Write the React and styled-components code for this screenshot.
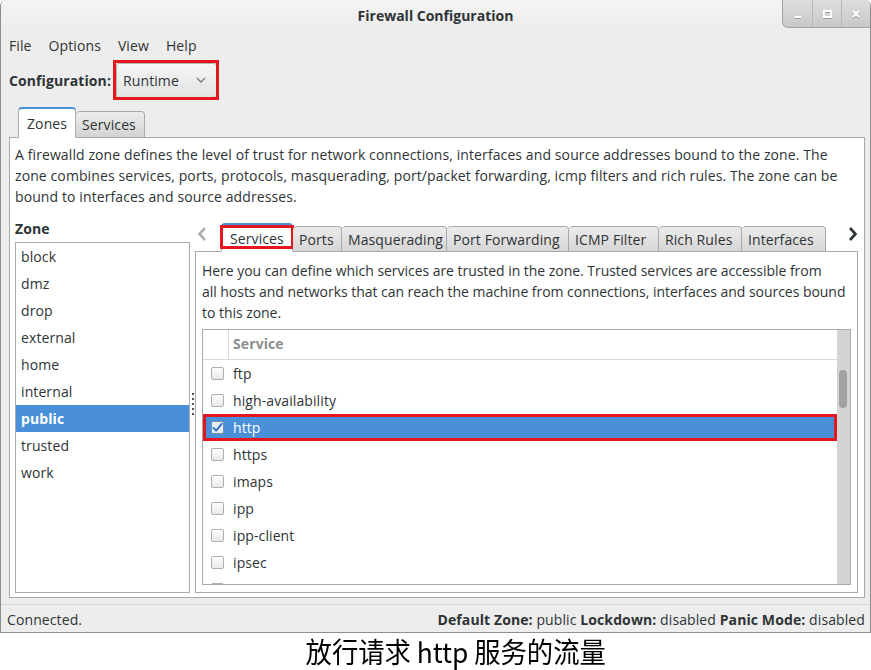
import React from 'react';
import styled, { createGlobalStyle } from 'styled-components';

const GlobalStyle = createGlobalStyle`
  body {
    margin: 0;
    background: #ffffff;
    font-family: "Open Sans", "Noto Sans", sans-serif;
    font-size: 14px;
    letter-spacing: 0.1px;
    color: #2e3436;
  }
  * { box-sizing: border-box; }
`;

const red = '#e5161f';
const blue = '#4a90d9';
const frame = '#a9a9a9';

const zones = ['block', 'dmz', 'drop', 'external', 'home', 'internal', 'public', 'trusted', 'work'];
const services = ['ftp', 'high-availability', 'http', 'https', 'imaps', 'ipp', 'ipp-client', 'ipsec'];
const innerTabs = [
  { label: 'Services', width: 72 },
  { label: 'Ports', width: 49 },
  { label: 'Masquerading', width: 105 },
  { label: 'Port Forwarding', width: 122 },
  { label: 'ICMP Filter', width: 90 },
  { label: 'Rich Rules', width: 83 },
  { label: 'Interfaces', width: 84 },
];

function Checkbox({ checked }) {
  return (
    <Check checked={checked}>
      {checked && (
        <svg width="12" height="11" viewBox="0 0 12 11">
          <path d="M1.5 6 L4.5 9 L10.5 1.5" fill="none" stroke="#2a6bc2" strokeWidth="2" strokeLinecap="round" strokeLinejoin="round" />
        </svg>
      )}
    </Check>
  );
}

function App() {
  return (
    <>
      <GlobalStyle />
      <Window>
        <TitleBar>
          <Title>Firewall Configuration</Title>
          <WindowButtons>
            <WinButton>
              <svg width="10" height="10" viewBox="0 0 10 10"><rect x="2" y="7" width="6" height="2" fill="#fff" /></svg>
            </WinButton>
            <WinButton>
              <svg width="10" height="10" viewBox="0 0 10 10"><rect x="2" y="2" width="7" height="6" fill="none" stroke="#fff" strokeWidth="2" /></svg>
            </WinButton>
            <WinButton>
              <svg width="10" height="10" viewBox="0 0 10 10"><path d="M2 2 L8 8 M8 2 L2 8" stroke="#fff" strokeWidth="2" /></svg>
            </WinButton>
          </WindowButtons>
        </TitleBar>

        <MenuBar>
          <MenuItem>File</MenuItem>
          <MenuItem>Options</MenuItem>
          <MenuItem>View</MenuItem>
          <MenuItem>Help</MenuItem>
        </MenuBar>

        <ConfigRow>
          <Bold>Configuration:</Bold>
          <Combo>
            Runtime
            <svg width="10" height="7" viewBox="0 0 10 7">
              <path d="M1 1 L5 5 L9 1" fill="none" stroke="#7a7a7a" strokeWidth="1.3" />
            </svg>
            <ComboMarker />
          </Combo>
        </ConfigRow>

        <Notebook>
          <TabStrip>
            <Tab active>Zones</Tab>
            <Tab>Services</Tab>
          </TabStrip>
          <Page>
            <Description>
              <Line>A firewalld zone defines the level of trust for network connections, interfaces and source addresses bound to the zone. The</Line>
              <Line>zone combines services, ports, protocols, masquerading, port/packet forwarding, icmp filters and rich rules. The zone can be</Line>
              <Line>bound to interfaces and source addresses.</Line>
            </Description>

            <Lower>
              <ZoneColumn>
                <ZoneLabel>Zone</ZoneLabel>
                <ZoneList>
                  {zones.map(z => (
                    <ZoneItem key={z} selected={z === 'public'}>{z}</ZoneItem>
                  ))}
                </ZoneList>
              </ZoneColumn>

              <Sash>
                {[0, 1, 2, 3, 4].map(i => <Dot key={i} />)}
              </Sash>

              <RightColumn>
                <InnerTabRow>
                  <Arrow>
                    <svg width="10" height="16" viewBox="0 0 10 16">
                      <path d="M8 2 L2.5 8 L8 14" fill="none" stroke="#b0b0b0" strokeWidth="2.6" />
                    </svg>
                  </Arrow>
                  {innerTabs.map((t, i) => (
                    <InnerTab key={t.label} active={i === 0} width={t.width}>
                      {t.label}
                      {i === 0 && <Marker />}
                    </InnerTab>
                  ))}
                  <Spacer />
                  <Arrow right>
                    <svg width="10" height="16" viewBox="0 0 10 16">
                      <path d="M2 2 L7.5 8 L2 14" fill="none" stroke="#2e3436" strokeWidth="2.6" />
                    </svg>
                  </Arrow>
                </InnerTabRow>

                <InnerPage>
                  <InnerDescription>
                    <Line>Here you can define which services are trusted in the zone. Trusted services are accessible from</Line>
                    <Line>all hosts and networks that can reach the machine from connections, interfaces and sources bound</Line>
                    <Line>to this zone.</Line>
                  </InnerDescription>

                  <Tree>
                    <TreeBody>
                      <TreeHeader>
                        <HeaderCheckCell />
                        <HeaderTitle>Service</HeaderTitle>
                      </TreeHeader>
                      {services.map(s => (
                        <ServiceRow key={s} selected={s === 'http'}>
                          <CheckCell><Checkbox checked={s === 'http'} /></CheckCell>
                          <ServiceName>{s}</ServiceName>
                        </ServiceRow>
                      ))}
                      <ServiceRow>
                        <CheckCell><Checkbox /></CheckCell>
                      </ServiceRow>
                    </TreeBody>
                    <Scrollbar>
                      <Thumb />
                    </Scrollbar>
                  </Tree>
                </InnerPage>
              </RightColumn>
            </Lower>
          </Page>
        </Notebook>

        <StatusBar>
          <span>Connected.</span>
          <span>
            <Bold>Default Zone:</Bold> public <Bold>Lockdown:</Bold> disabled <Bold>Panic Mode:</Bold> disabled
          </span>
        </StatusBar>
      </Window>
      <Caption><CaptionText>放行请求 http 服务的流量</CaptionText></Caption>
    </>
  );
}

const Window = styled.div`
  width: 871px;
  height: 633px;
  background: #ededed;
  border: 1px solid #8e8e8e;
  border-top: none;
  border-radius: 6px 6px 0 0;
  display: flex;
  flex-direction: column;
  overflow: hidden;
`;

const TitleBar = styled.div`
  height: 30px;
  flex: none;
  position: relative;
  display: flex;
  align-items: center;
  justify-content: center;
  background: linear-gradient(#f4f4f4, #ececec);
`;

const Title = styled.div`
  font-weight: 700;
  font-size: 14px;
  letter-spacing: 0;
  color: #2e3436;
  margin-top: 1px;
`;

const WindowButtons = styled.div`
  position: absolute;
  top: 0;
  right: -1px;
  height: 28px;
  display: flex;
  border: 1px solid #a4a4a4;
  border-top: none;
  border-radius: 0 0 0 6px;
  overflow: hidden;
  background: linear-gradient(#dedede, #c8c8c8);
`;

const WinButton = styled.div`
  width: 29px;
  display: flex;
  align-items: center;
  justify-content: center;
  border-left: 1px solid #b8b8b8;
  &:first-child { border-left: none; }
  svg { filter: drop-shadow(0 1px 0 #9a9a9a); }
`;

const MenuBar = styled.div`
  height: 30px;
  flex: none;
  display: flex;
  align-items: center;
  padding-left: 8px;
  gap: 17px;
`;

const MenuItem = styled.span``;

const ConfigRow = styled.div`
  height: 40px;
  flex: none;
  display: flex;
  align-items: center;
  padding-left: 8px;
  gap: 5px;
`;

const Bold = styled.b`
  font-weight: 700;
`;

const Combo = styled.div`
  position: relative;
  width: 101px;
  height: 35px;
  border: 1px solid #b6b6b6;
  border-radius: 3px;
  background: linear-gradient(#f6f6f6, #e2e2e2);
  display: flex;
  align-items: center;
  justify-content: space-between;
  padding: 0 10px 0 6px;
`;

const ComboMarker = styled.span`
  position: absolute;
  top: -4px;
  left: -4px;
  right: -3px;
  bottom: -3px;
  border: 3px solid ${red};
`;

const Notebook = styled.div`
  flex: none;
  display: flex;
  flex-direction: column;
  padding: 8px 5px 0 8px;
`;

const TabStrip = styled.div`
  height: 30px;
  display: flex;
  align-items: flex-end;
  padding-left: 9px;
  margin-bottom: -1px;
  position: relative;
  z-index: 1;
`;

const Tab = styled.div`
  height: ${p => (p.active ? '31px' : '27px')};
  padding: 0 8px 0 ${p => (p.active ? '8px' : '6px')};
  display: flex;
  align-items: center;
  border: 1px solid ${frame};
  border-bottom: ${p => (p.active ? '1px solid #fff' : `1px solid ${frame}`)};
  border-top: ${p => (p.active ? `2px solid ${blue}` : `1px solid ${frame}`)};
  border-left: ${p => (p.active ? `1px solid ${frame}` : 'none')};
  border-radius: 4px 4px 0 0;
  background: ${p => (p.active ? '#fff' : 'linear-gradient(#ececec, #d3d3d3)')};
`;

const Page = styled.div`
  height: 461px;
  background: #fff;
  border: 1px solid ${frame};
  display: flex;
  flex-direction: column;
  padding: 0 6px 4px 5px;
`;

const Description = styled.div`
  padding-top: 6px;
  line-height: 21px;
`;

const InnerDescription = styled(Description)`
  padding-top: 8px;
  letter-spacing: -0.04px;
`;

const Line = styled.div`
  white-space: nowrap;
`;

const Lower = styled.div`
  flex: 1;
  display: flex;
  margin-top: 11px;
  min-height: 0;
`;

const ZoneColumn = styled.div`
  width: 175px;
  flex: none;
  display: flex;
  flex-direction: column;
  min-height: 0;
`;

const ZoneLabel = styled.div`
  height: 24px;
  line-height: 21px;
  font-weight: 700;
`;

const ZoneList = styled.div`
  flex: 1;
  border: 1px solid ${frame};
  background: #fff;
  overflow: hidden;
`;

const ZoneItem = styled.div`
  height: 27px;
  line-height: 27px;
  padding-left: 5px;
  background: ${p => (p.selected ? blue : 'transparent')};
  color: ${p => (p.selected ? '#fff' : 'inherit')};
  font-weight: ${p => (p.selected ? 700 : 400)};
`;

const Sash = styled.div`
  width: 5px;
  flex: none;
  display: flex;
  flex-direction: column;
  align-items: center;
  justify-content: center;
  gap: 3px;
  padding-bottom: 4px;
`;

const Dot = styled.span`
  width: 2px;
  height: 2px;
  background: #555;
`;

const RightColumn = styled.div`
  flex: 1;
  min-width: 0;
  display: flex;
  flex-direction: column;
  min-height: 0;
`;

const InnerTabRow = styled.div`
  height: 34px;
  flex: none;
  display: flex;
  align-items: flex-end;
  margin-bottom: -1px;
  position: relative;
  z-index: 1;
`;

const Arrow = styled.div`
  width: ${p => (p.right ? '14px' : '26px')};
  height: 34px;
  display: flex;
  align-items: center;
  justify-content: ${p => (p.right ? 'flex-end' : 'flex-start')};
  padding: 0 0 2px 2px;
  align-self: flex-start;
`;

const InnerTab = styled.div`
  position: relative;
  width: ${p => p.width}px;
  height: ${p => (p.active ? '29px' : '26px')};
  padding-left: ${p => (p.active ? '8px' : '6px')};
  display: flex;
  align-items: center;
  border: 1px solid ${frame};
  border-left: ${p => (p.active ? `1px solid ${frame}` : 'none')};
  border-top: ${p => (p.active ? `2px solid ${blue}` : `1px solid ${frame}`)};
  border-bottom: ${p => (p.active ? '1px solid #fff' : `1px solid ${frame}`)};
  border-radius: 4px 4px 0 0;
  background: ${p => (p.active ? '#fff' : 'linear-gradient(#ececec, #d6d6d6)')};
  white-space: nowrap;
`;

const Marker = styled.span`
  position: absolute;
  top: 0;
  left: -2px;
  right: -2px;
  bottom: 2px;
  border: 3px solid ${red};
`;

const Spacer = styled.div`
  flex: 1;
`;

const InnerPage = styled.div`
  flex: 1;
  min-height: 0;
  border: 1px solid ${frame};
  background: #fff;
  display: flex;
  flex-direction: column;
  padding: 0 6px 7px 6px;
`;

const Tree = styled.div`
  flex: 1;
  min-height: 0;
  margin-top: 6px;
  border: 1px solid ${frame};
  display: flex;
  overflow: hidden;
`;

const TreeBody = styled.div`
  flex: 1;
  overflow: hidden;
`;

const TreeHeader = styled.div`
  height: 30px;
  display: flex;
  border-bottom: 1px solid #dadada;
`;

const HeaderCheckCell = styled.div`
  width: 26px;
  border-right: 1px solid #dadada;
`;

const HeaderTitle = styled.div`
  padding-left: 4px;
  line-height: 28px;
  font-weight: 700;
  color: #8b8e8f;
`;

const ServiceRow = styled.div`
  height: 27px;
  display: flex;
  align-items: center;
  background: ${p => (p.selected ? blue : 'transparent')};
  color: ${p => (p.selected ? '#fff' : 'inherit')};
  outline: ${p => (p.selected ? `3px solid ${red}` : 'none')};
  outline-offset: -3px;
`;

const CheckCell = styled.div`
  width: 26px;
  display: flex;
  justify-content: center;
  padding-left: 2px;
`;

const Check = styled.span`
  width: 13px;
  height: 13px;
  border: 1px solid ${p => (p.checked ? '#6f8fb8' : '#aeaeae')};
  border-radius: 2px;
  background: ${p => (p.checked ? '#e9eef5' : 'linear-gradient(#ffffff, #e8e8e8)')};
  display: flex;
  align-items: center;
  justify-content: center;
`;

const ServiceName = styled.span`
  padding-left: 4px;
`;

const Scrollbar = styled.div`
  width: 13px;
  flex: none;
  background: #d4d4d4;
  padding: 40px 3px 0 2px;
`;

const Thumb = styled.div`
  height: 38px;
  border-radius: 4px;
  background: #a2a2a2;
`;

const StatusBar = styled.div`
  flex: 1;
  margin-top: 6px;
  border-top: 1px solid #d6d6d6;
  display: flex;
  align-items: center;
  justify-content: space-between;
  padding: 2px 5px 0 6px;
`;

const Caption = styled.div`
  height: 37px;
  display: flex;
  justify-content: center;
  padding-left: 40px;
`;

const CaptionText = styled.span`
  display: inline-block;
  font-family: "Noto Sans CJK SC", "Noto Sans", sans-serif;
  font-size: 28px;
  line-height: 37px;
  letter-spacing: 0;
  color: #000;
  transform: scaleX(0.94);
`;

export default App;
